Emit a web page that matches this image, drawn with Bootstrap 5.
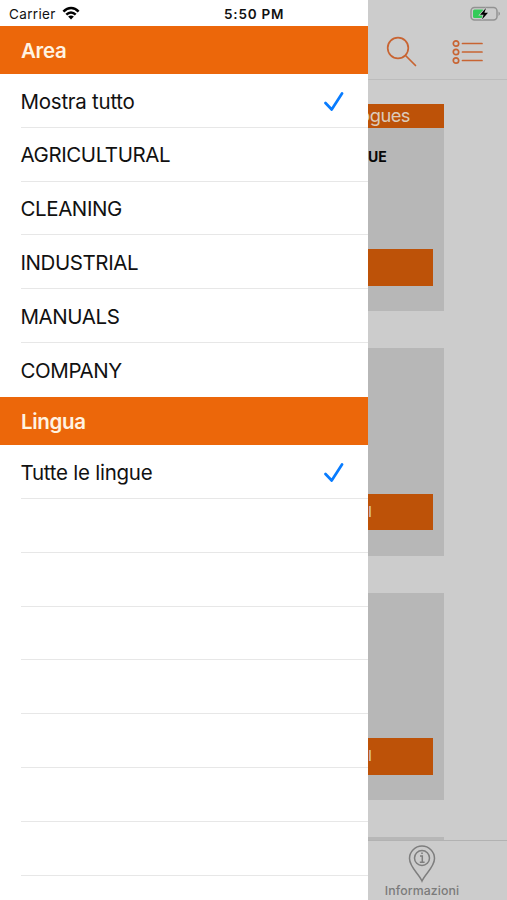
<!DOCTYPE html>
<html lang="it">
<head>
<meta charset="utf-8">
<meta name="viewport" content="width=device-width, initial-scale=1">
<title>Area</title>
<link href="https://cdn.jsdelivr.net/npm/bootstrap@5.3.0/dist/css/bootstrap.min.css" rel="stylesheet">
<style>
body{font-family:Inter,"Liberation Sans",sans-serif;color:#111;line-height:1.2}
.screen{width:507px;height:900px;background:#ccc}
.drawer{width:368px;background:#fff}
.statusbar{height:25.5px;font-size:13px;padding:3px 0 0 9px;white-space:nowrap}
.carrier{width:48px;font-size:13.5px;letter-spacing:.35px}
.clock{margin-left:143px;font-size:13.5px;font-weight:600;letter-spacing:.8px}
.section-title{height:48.5px;background:#ec670a;color:#fff3e2;font-size:20.5px;font-weight:600;padding:3.5px 0 0 21px;letter-spacing:-.3px}
.option{height:53.8px;margin-left:20.5px;padding:3px 24px 0 0;font-size:20.5px;letter-spacing:-.42px;border-bottom:1px solid #e7e7e7;white-space:nowrap}
.option.mixed-case{letter-spacing:-.25px}
.option.last-option{border-bottom-color:transparent}
.backdrop-page{width:139px}
.battery{margin:2.500px 5px 0 0}
.topbar{height:54px;border-bottom:1px solid #bcbcbc}
.tile{width:75.5px;height:207.5px;margin-bottom:37px;background:#b7b7b7;padding-bottom:25.5px}
.tile-title{height:24.5px;background:#bd5208;color:#dccbbb;font-size:18.3px;letter-spacing:-.5px;padding:1px 33.5px 0 0}
.tile-name{font-size:14px;font-weight:700;color:#080808;margin-top:21px;padding-right:57px}
.tile-button{width:64.5px;height:36.5px;background:#bd5208;color:#dccbbb;font-size:15px}
.tabbar{height:60.5px;border-top:1px solid #b2b2b2;background:#ccc;color:#7b7b7b;font-size:12.3px;font-weight:500;letter-spacing:.1px;padding-right:31px}
.tab-label{margin-top:1px}
</style>
<script src="https://cdn.jsdelivr.net/npm/bootstrap@5.3.0/dist/js/bootstrap.bundle.min.js"></script>
</head>
<body>
<div class="screen d-flex overflow-hidden">
  <aside class="drawer flex-shrink-0 overflow-hidden">
    <div class="statusbar d-flex align-items-center">
      <span class="carrier">Carrier</span>
      <svg class="ms-1" style="margin-top:-2px" width="20" height="15" viewBox="0 0 20 15" fill="none" stroke="#000" stroke-width="2.500"><path d="M2.400 5.700C7 .900 13.200 .900 17.600 5.700M5.300 8.700C8.200 5.800 11.800 5.800 14.700 8.700"/><path d="M7.100 10.600Q10 8.200 12.900 10.600L10 13.600Z" fill="#000" stroke="none"/></svg>
      <span class="clock">5:50 PM</span>
    </div>
    <div class="section-title d-flex align-items-center"><span>Area</span></div>
    <div class="option mixed-case d-flex align-items-center justify-content-between"><span>Mostra tutto</span>
      <svg width="20" height="20" viewBox="0 0 20 20" fill="none" stroke="#087cff" stroke-width="2.700" stroke-linecap="round" stroke-linejoin="round"><path d="M1.500 11 7.700 17.500 18 1.500"/></svg></div>
    <div class="option d-flex align-items-center"><span>AGRICULTURAL</span></div>
    <div class="option d-flex align-items-center"><span>CLEANING</span></div>
    <div class="option d-flex align-items-center"><span>INDUSTRIAL</span></div>
    <div class="option d-flex align-items-center"><span>MANUALS</span></div>
    <div class="option last-option d-flex align-items-center"><span>COMPANY</span></div>
    <div class="section-title d-flex align-items-center"><span>Lingua</span></div>
    <div class="option mixed-case d-flex align-items-center justify-content-between"><span>Tutte le lingue</span>
      <svg width="20" height="20" viewBox="0 0 20 20" fill="none" stroke="#087cff" stroke-width="2.700" stroke-linecap="round" stroke-linejoin="round"><path d="M1.500 11 7.700 17.500 18 1.500"/></svg></div>
    <div class="option"></div><div class="option"></div><div class="option"></div><div class="option"></div>
    <div class="option"></div><div class="option"></div><div class="option"></div><div class="option"></div>
  </aside>
  <main class="backdrop-page d-flex flex-column overflow-hidden">
    <div class="statusbar d-flex align-items-start justify-content-end flex-shrink-0">
      <svg class="battery" width="33" height="18" viewBox="0 1 33 18"><rect x="2" y="2.500" width="26" height="12.500" rx="3.500" fill="none" stroke="#929292" stroke-width="1.500"/><path d="M29.500 6.500q3 2 0 4.500z" fill="#929292"/><rect x="4" y="4.500" width="11" height="8.500" rx="1.500" fill="#34cb58"/><path d="M17 3 11 9.700h3.600L13 14.500 19 7.700h-3.600z" fill="#000" stroke="#ccc" stroke-width="1.500" paint-order="stroke"/></svg>
    </div>
    <header class="topbar d-flex align-items-center flex-shrink-0">
      <svg style="margin-left:18px" width="32" height="32" viewBox="0 0 32 32" fill="none" stroke="#c86432" stroke-width="1.700" stroke-linecap="round"><circle cx="12" cy="12" r="10.300"/><path d="m19.500 19.500 10 10"/></svg>
      <svg style="margin-left:34px" width="32" height="28" viewBox="0 0 32 28" fill="none" stroke="#c86432" stroke-width="1.700" stroke-linecap="round"><circle cx="4" cy="5.500" r="2.700"/><circle cx="4" cy="14" r="2.700"/><circle cx="4" cy="22.500" r="2.700"/><path d="M10.500 5.500h19.500M10.500 14h19.500M10.500 22.500h19.500"/></svg>
    </header>
    <div class="flex-fill overflow-hidden pt-4">
      <section class="tile d-flex flex-column">
        <div class="tile-title d-flex align-items-center justify-content-end"><span>ogues</span></div>
        <div class="tile-name text-end">UE</div>
        <div class="tile-button mt-auto"></div>
      </section>
      <section class="tile d-flex flex-column"><div class="tile-button mt-auto d-flex align-items-center"><span>I</span></div></section>
      <section class="tile d-flex flex-column"><div class="tile-button mt-auto d-flex align-items-center"><span>I</span></div></section>
      <section class="tile"></section>
    </div>
    <nav class="tabbar d-flex flex-column align-items-center flex-shrink-0">
      <svg class="mt-1" width="28" height="38" viewBox="0 0 28 38" fill="none" stroke="#7e7e7e" stroke-width="1.500"><path d="M14 36C11 29 1.500 22 1.500 13.500a12.500 12.500 0 0 1 25 0C26.500 22 17 29 14 36Z"/><circle cx="14" cy="13" r="7.500"/><path d="M12 11h2.300v6M11.800 17.200h4.800M13.200 8.200h1.600"/></svg>
      <span class="tab-label">Informazioni</span>
    </nav>
  </main>
</div>
</body>
</html>
